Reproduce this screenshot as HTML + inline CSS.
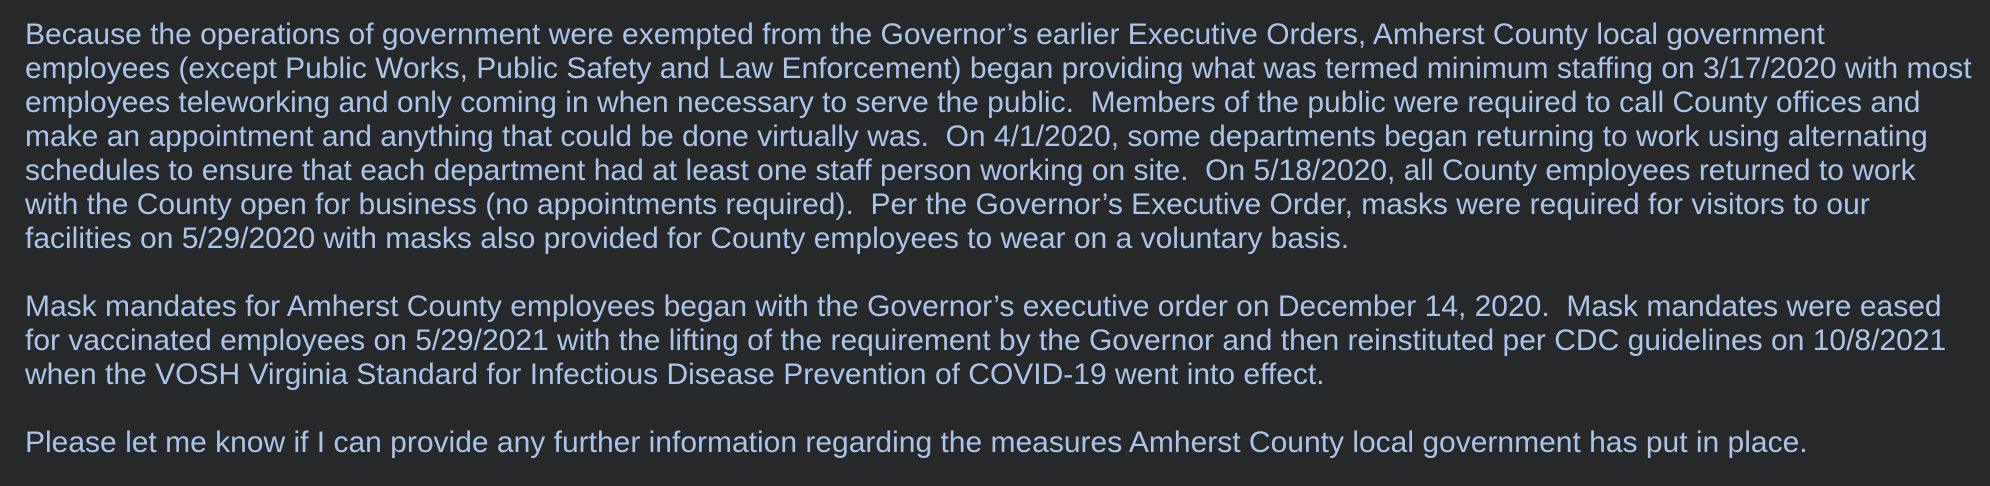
<!DOCTYPE html>
<html><head><meta charset="utf-8"><style>
html,body{margin:0;padding:0;background:#262829;width:1990px;height:486px;overflow:hidden}
.t{position:absolute;left:25px;top:18px;font-family:"Liberation Sans",Arial,sans-serif;font-size:30px;line-height:34px;color:#aac4ea;white-space:pre}
</style></head><body>
<div class="t">Because the operations of government were exempted from the Governor’s earlier Executive Orders, Amherst County local government
employees (except Public Works, Public Safety and Law Enforcement) began providing what was termed minimum staffing on 3/17/2020 with most
employees teleworking and only coming in when necessary to serve the public.  Members of the public were required to call County offices and
make an appointment and anything that could be done virtually was.  On 4/1/2020, some departments began returning to work using alternating
schedules to ensure that each department had at least one staff person working on site.  On 5/18/2020, all County employees returned to work
with the County open for business (no appointments required).  Per the Governor’s Executive Order, masks were required for visitors to our
facilities on 5/29/2020 with masks also provided for County employees to wear on a voluntary basis.

Mask mandates for Amherst County employees began with the Governor’s executive order on December 14, 2020.  Mask mandates were eased
for vaccinated employees on 5/29/2021 with the lifting of the requirement by the Governor and then reinstituted per CDC guidelines on 10/8/2021
when the VOSH Virginia Standard for Infectious Disease Prevention of COVID-19 went into effect.

Please let me know if I can provide any further information regarding the measures Amherst County local government has put in place.</div>
</body></html>
